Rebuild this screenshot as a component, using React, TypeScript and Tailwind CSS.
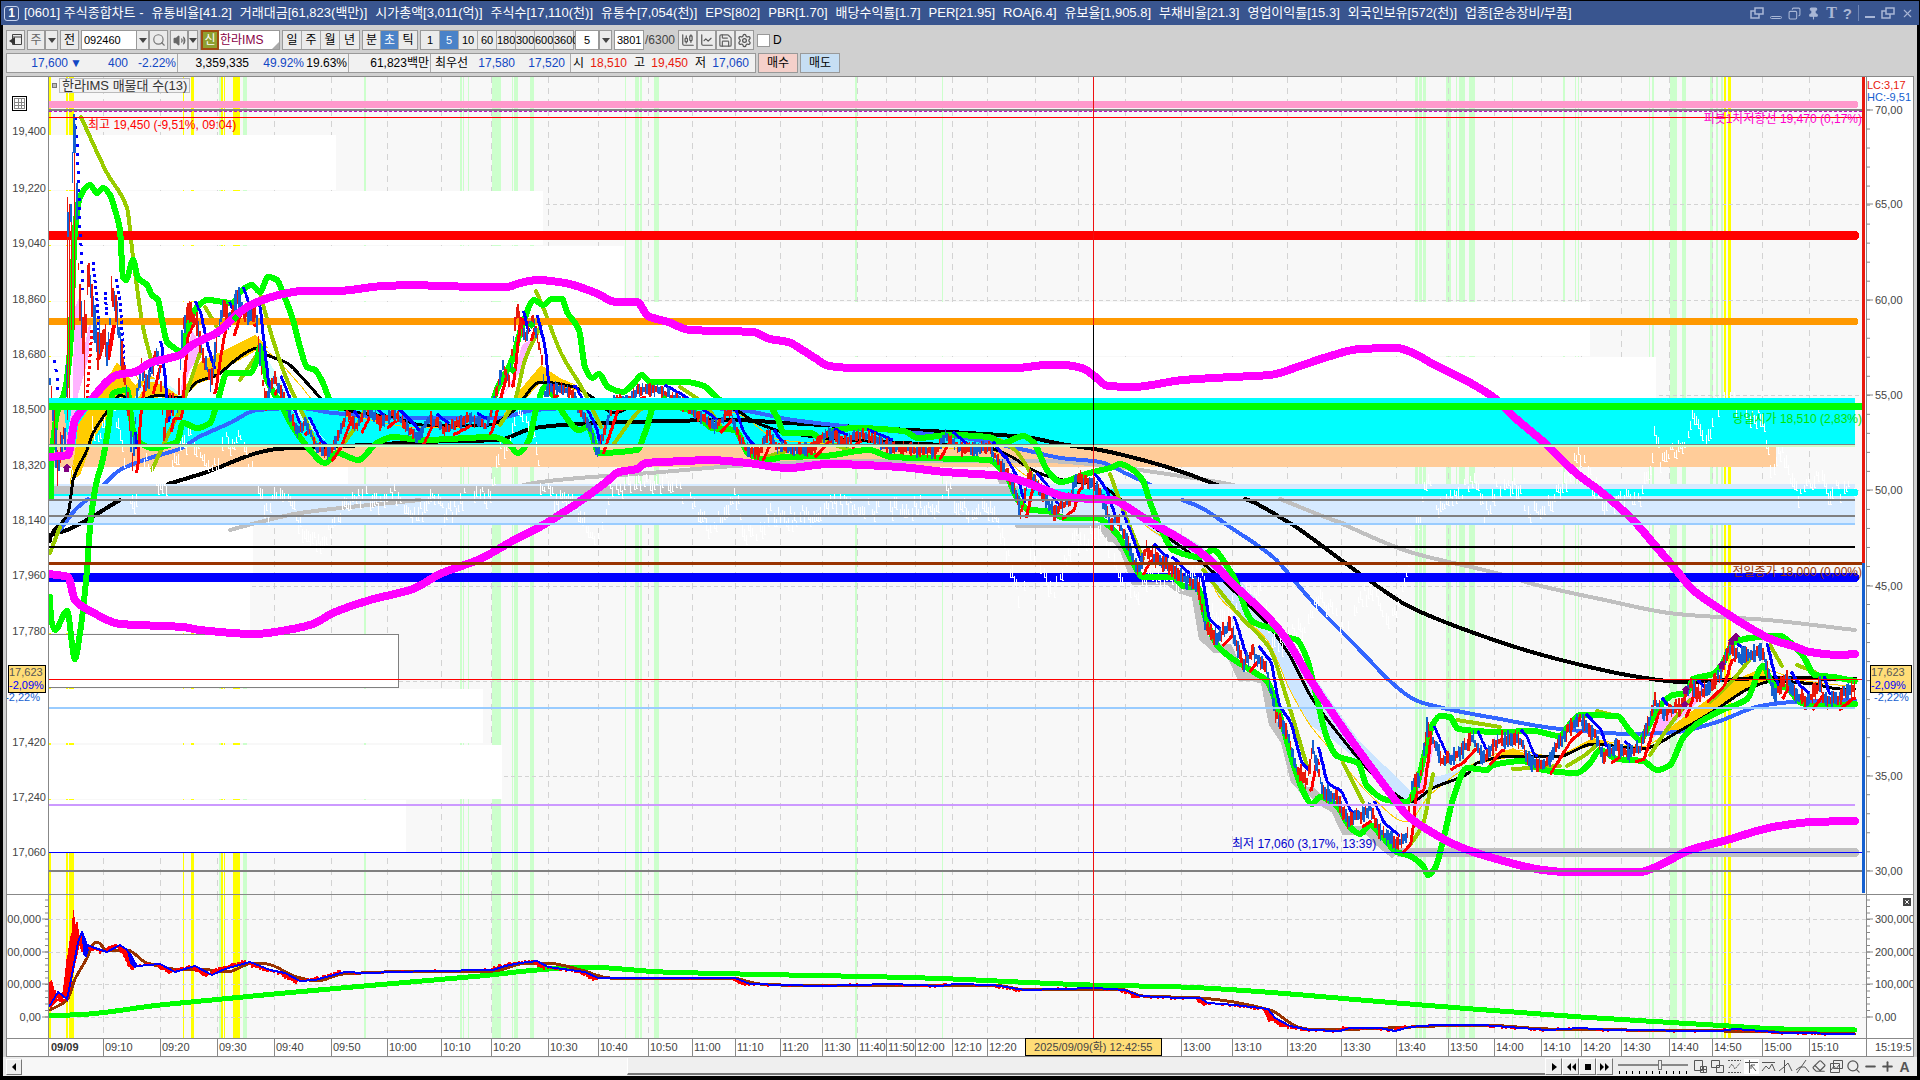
import type { ReactNode } from 'react';
import { Search, Save, Settings, Pin, X, Copy, Minus, Plus, ChartLine, Eraser, ChartCandlestick, Volume2 } from 'lucide-react';

const FONT = "font-['Liberation_Sans','Noto_Sans_CJK_KR',sans-serif]";

type Pt = [number, number];

const parse = (s: string): Pt[] => s.trim().split(/\s+/).map((p) => p.split(',').map(Number) as Pt);

const random = (seed: number) => {
  let s = seed;
  return () => {
    s = (s * 16807) % 2147483647;
    return s / 2147483647;
  };
};

const sample = (pts: Pt[], x: number) => {
  for (let i = 1; i < pts.length; i++) {
    if (x <= pts[i][0]) {
      const [x0, y0] = pts[i - 1];
      const [x1, y1] = pts[i];
      return y0 + ((y1 - y0) * (x - x0)) / (x1 - x0 || 1);
    }
  }
  return pts[pts.length - 1][1];
};

// Monotone cubic path: smooth, and never overshoots the given points
const smooth = (s: string) => {
  const p = parse(s);
  const n = p.length;
  const slopes: number[] = [];
  for (let i = 0; i < n - 1; i++) {
    const dx = p[i + 1][0] - p[i][0];
    slopes.push(dx > 0 ? (p[i + 1][1] - p[i][1]) / dx : 0);
  }
  const tangent = p.map((_, i) => {
    if (i === 0) return slopes[0];
    if (i === n - 1) return slopes[n - 2];
    const a = slopes[i - 1];
    const b = slopes[i];
    return a * b <= 0 ? 0 : (2 * a * b) / (a + b);
  });
  let d = `M${p[0][0]} ${p[0][1]}`;
  for (let i = 0; i < n - 1; i++) {
    const [x0, y0] = p[i];
    const [x1, y1] = p[i + 1];
    const h = (x1 - x0) / 3;
    if (h <= 0) d += `L${x1} ${y1}`;
    else d += `C${(x0 + h).toFixed(1)} ${(y0 + tangent[i] * h).toFixed(1)} ${(x1 - h).toFixed(1)} ${(y1 - tangent[i + 1] * h).toFixed(1)} ${x1} ${y1}`;
  }
  return d;
};

const yellowBars = [[49, 2], [66, 2], [69, 5], [183, 1], [191, 3], [221, 2], [224, 1], [233, 7], [1724, 2], [1728, 3]];
const greenBars = [
  [219, 2], [243, 4], [364, 2], [460, 2], [463, 1], [468, 1], [492, 9], [512, 1], [514, 4], [530, 4], [625, 1], [635, 4],
  [640, 2], [654, 5], [855, 2], [942, 1], [1415, 3], [1419, 3], [1423, 3], [1446, 5], [1456, 1], [1459, 6], [1469, 6],
  [1512, 1], [1563, 2], [1575, 1], [1578, 1], [1649, 1], [1652, 2], [1670, 7], [1682, 4], [1710, 3], [1716, 2], [1721, 2],
];

const times: [number, string][] = [
  [103, '09:10'], [160, '09:20'], [217, '09:30'], [274, '09:40'], [331, '09:50'], [387, '10:00'], [441, '10:10'],
  [491, '10:20'], [548, '10:30'], [598, '10:40'], [648, '10:50'], [692, '11:00'], [735, '11:10'], [780, '11:20'],
  [822, '11:30'], [857, '11:40'], [886, '11:50'], [915, '12:00'], [952, '12:10'], [987, '12:20'], [1035, ''], [1078, ''],
  [1125, ''], [1181, '13:00'], [1232, '13:10'], [1287, '13:20'], [1341, '13:30'], [1396, '13:40'], [1448, '13:50'],
  [1494, '14:00'], [1541, '14:10'], [1581, '14:20'], [1621, '14:30'], [1669, '14:40'], [1712, '14:50'], [1762, '15:00'],
  [1809, '15:10'],
];

// volume by price: y, height, right edge
const profile = [
  [135, 55, 336], [191, 54, 543], [246, 55, 624], [302, 54, 1590], [357, 42, 1656], [467, 18, 348], [525, 52, 253],
  [578, 55, 250], [689, 54, 483], [745, 54, 502], [800, 52, 406],
];

const magentaTop = '49,457 68,455 75,420 87,405 117,375 135,372 150,363 180,355 192,345 218,332 240,312 255,303 283,294 303,291 337,291 383,286 420,285 435,286 507,287 520,283 538,280 565,283 596,293 616,302 637,302 648,316 668,322 690,330 753,332 770,339 788,342 804,351 815,358 829,366 855,368 1016,368 1047,365 1063,365 1082,368 1093,375 1108,386 1133,387 1183,380 1233,377 1270,375 1300,366 1327,357 1360,349 1397,348 1413,353 1433,364 1467,381 1493,397 1513,416 1547,445 1577,474 1600,491 1633,520 1653,543 1677,571 1693,590 1723,611 1750,628 1773,640 1793,646 1810,652 1840,655 1855,654';
const magentaLow = '49,574 68,577 75,600 92,612 120,624 183,627 200,630 255,634 287,630 313,624 333,613 370,600 413,589 440,574 480,559 516,539 538,528 579,502 605,483 619,472 637,469 646,463 686,461 708,460 748,463 788,468 829,464 900,467 945,472 1003,476 1025,482 1043,489 1067,497 1093,499 1113,500 1127,507 1147,520 1187,543 1210,560 1233,584 1267,616 1287,640 1310,679 1347,734 1390,793 1407,815 1423,827 1460,847 1500,860 1543,870 1567,872 1640,872 1660,865 1690,850 1727,840 1773,827 1813,822 1855,821';
const greenTop = '51,497 51,450 57,413 65,390 70,350 75,230 80,197 90,185 97,193 103,188 110,195 115,210 120,230 123,277 126,280 133,260 138,278 147,285 152,295 158,300 162,320 167,342 173,347 182,352 188,327 197,307 207,300 233,303 240,292 252,285 260,292 268,277 277,280 283,293 293,320 300,347 307,367 315,370 323,383 330,400 340,408 367,402 420,407 489,407 498,387 512,360 523,323 534,300 543,305 552,299 562,299 567,312 579,330 585,367 592,378 599,374 608,387 623,392 634,383 642,375 650,382 686,382 704,386 712,393 726,403 766,403 777,417 784,433 811,433 820,438 833,431 855,428 904,431 918,438 949,435 989,437 1003,443 1023,436 1034,443 1047,470 1061,482 1083,475 1093,472 1110,468 1120,464 1133,470 1143,481 1150,502 1160,527 1173,550 1200,557 1213,550 1227,566 1237,584 1247,613 1253,622 1273,629 1290,638 1297,640 1307,659 1317,699 1327,738 1337,756 1358,763 1367,786 1387,800 1407,802 1417,784 1425,752 1433,724 1440,716 1450,717 1458,729 1500,732 1533,731 1560,736 1570,724 1580,715 1617,716 1630,731 1640,740 1648,727 1660,706 1673,695 1687,693 1693,679 1713,674 1723,663 1733,643 1750,638 1780,636 1793,645 1803,656 1815,675 1833,677 1855,681';
const greenLow = '50,597 51,619 55,630 67,611 75,659 80,633 86,581 91,517 97,480 102,463 108,430 113,393 127,390 133,430 140,443 152,448 177,442 183,423 197,428 210,423 218,400 227,373 250,373 257,360 260,347 267,380 280,403 293,427 310,450 325,463 337,453 358,460 377,443 393,437 422,440 494,437 507,442 518,453 529,440 536,410 545,387 554,397 563,413 579,430 588,427 599,453 637,450 646,430 654,407 677,407 695,413 712,428 735,430 748,453 766,460 784,457 824,456 869,450 891,457 989,460 1007,477 1018,500 1029,510 1047,511 1065,518 1096,518 1117,534 1133,563 1143,577 1173,577 1183,586 1198,588 1205,616 1217,645 1230,657 1257,674 1267,681 1280,716 1293,763 1303,791 1312,804 1320,797 1337,806 1350,827 1360,834 1370,825 1380,834 1397,852 1410,856 1423,866 1428,875 1435,868 1443,841 1453,799 1467,768 1487,770 1493,765 1523,761 1543,770 1577,773 1590,763 1600,750 1617,759 1643,761 1657,770 1670,765 1683,738 1697,724 1720,711 1747,699 1763,666 1773,684 1787,688 1800,702 1813,706 1855,704';
const blackLong = ['50,535 67,530 120,500 125,497 142,496', '168,484 207,472 257,453 277,449 320,447 367,445 420,442 498,440 534,428 579,424 668,421 730,420 788,423 891,429 1025,437 1061,444 1100,450 1123,455 1167,467 1217,485 1253,502 1293,525 1333,554 1370,581 1410,607 1500,642 1557,659 1633,676 1683,682 1767,678 1855,679'];
const blackMid = '50,542 52,533 68,513 73,480 87,450 93,433 110,408 120,395 133,402 160,395 180,398 197,382 217,375 233,362 247,352 257,348 267,355 287,363 307,383 327,403 360,413 393,417 422,425 489,425 512,412 541,382 574,387 592,397 614,413 641,403 686,405 730,408 757,423 788,433 846,440 891,442 989,448 1012,457 1029,468 1047,476 1079,483 1103,486 1127,504 1150,524 1200,561 1233,590 1267,624 1290,656 1310,695 1333,727 1367,768 1390,790 1410,802 1433,788 1467,774 1477,763 1513,756 1557,757 1593,744 1640,749 1683,729 1717,709 1750,688 1773,681 1813,684 1840,689 1855,689';
const blueMa = '60,530 77,508 92,497 120,470 150,458 182,448 197,438 230,423 257,410 300,408 333,413 420,418 498,418 534,410 600,407 686,407 739,410 793,420 882,430 958,437 1025,450 1061,458 1100,462 1127,474 1177,497 1200,507 1233,529 1273,557 1310,599 1350,640 1410,697 1423,703 1500,719 1560,729 1633,734 1677,732 1717,722 1760,706 1793,702 1855,700';
const grayMa = '230,530 260,522 300,513 420,500 480,496 534,483 579,478 650,473 735,466 846,461 1043,461 1100,465 1167,474 1233,485 1280,499 1333,520 1410,552 1500,574 1533,584 1600,599 1677,614 1767,620 1855,630';
const olive = [
  '81,117 107,173 127,208 133,257 143,327 152,363', '50,553 60,527', '152,470 167,437 180,410 200,353', '205,307 217,327',
  '240,380 260,350', '260,293 273,340 287,380 307,423 317,447', '335,455 357,425 370,405 393,407',
  '536,291 543,307 561,353 583,390 601,427', '500,425 515,400 525,360 541,325', '613,445 640,410 655,400',
  '680,387 705,405 720,425', '766,457 790,450', '820,440 850,450', '1000,440 1015,450 1035,480', '1110,474 1123,509 1143,559',
  '1203,570 1240,616 1270,649 1287,699 1307,766', '1343,763 1363,802', '1410,845 1423,824 1433,774', '1457,720 1500,727',
  '1513,769 1530,768 1560,766', '1567,766 1585,755 1597,745', '1597,711 1617,716', '1650,755 1670,725 1690,700',
  '1710,702 1733,680 1750,659', '1770,645 1782,666', '1797,665 1815,672',
];
const yellowMa = '50,540 68,505 72,470 85,420 95,400 120,380 130,370 150,395 180,398 200,375 255,345 275,358 300,385 325,412 360,418 422,428 495,425 541,375 575,385 600,410 625,405 690,402 740,415 780,440 850,445 990,450 1025,475 1050,488 1127,500 1145,525 1200,560 1220,598 1267,640 1290,690 1310,725 1340,760 1370,795 1407,822 1430,795 1477,762 1513,750 1557,757 1593,740 1640,747 1683,720 1720,700 1763,670 1800,680 1855,687';

const price = parse('49,370 52,400 55,440 58,475 62,440 66,430 68,230 71,220 73,150 75,125 77,200 79,290 82,320 85,350 88,270 93,313 98,350 103,330 108,350 112,290 116,310 121,350 127,400 133,465 137,395 142,365 148,385 157,350 162,400 164,433 170,405 178,405 183,325 190,310 197,325 203,355 211,382 217,340 223,308 230,323 238,295 245,315 255,310 260,355 265,400 275,378 283,397 297,432 305,423 317,447 327,455 337,440 347,413 357,427 367,407 380,423 393,413 410,430 418,440 429,417 445,430 469,417 487,427 496,393 503,367 509,380 517,307 525,340 532,317 541,353 545,393 556,387 572,393 579,407 592,433 597,453 608,420 614,402 628,400 639,390 659,390 677,400 695,413 715,427 730,410 739,437 748,450 759,453 768,433 777,447 811,450 826,433 846,442 858,433 891,447 936,452 945,435 963,450 989,448 1003,467 1014,487 1021,513 1029,477 1043,493 1054,513 1070,500 1076,478 1092,483 1103,499 1112,527 1117,516 1127,541 1137,570 1147,549 1160,563 1170,566 1182,579 1198,584 1205,627 1217,638 1230,624 1243,666 1253,652 1267,670 1275,713 1287,731 1297,770 1307,781 1313,749 1323,791 1337,799 1347,820 1360,816 1370,809 1380,831 1397,845 1407,834 1412,784 1420,781 1427,727 1433,741 1443,763 1460,752 1473,738 1483,759 1497,741 1517,738 1523,745 1530,763 1547,763 1567,731 1580,720 1597,738 1603,756 1617,747 1627,754 1640,749 1655,702 1663,713 1683,706 1690,684 1700,695 1720,677 1728,649 1740,656 1763,652 1770,681 1775,695 1785,677 1797,695 1807,702 1820,684 1825,702 1837,699 1850,688 1855,688');

const lagging = parse('90,400 95,440 105,410 115,410 121,440 130,505 135,498 145,455 160,480 165,480 180,445 190,430 205,455 217,465 223,440 240,435 258,485 268,510 275,490 285,490 300,520 315,535 325,535 345,500 367,490 380,500 395,490 418,515 429,488 445,510 470,490 490,495 500,440 505,450 516,405 535,430 540,480 555,495 575,500 590,530 598,535 610,485 640,480 670,480 690,500 710,525 735,490 745,530 760,530 768,510 780,515 820,510 826,495 870,505 940,500 945,480 960,505 990,505 1003,535 1020,600 1032,545 1053,590 1075,530 1085,540 1095,520 1110,550 1135,600 1145,570 1170,575 1198,570 1215,610 1225,610 1240,590 1260,590 1275,640 1305,620 1320,590 1345,625 1365,590 1370,580 1385,610 1400,605 1412,530 1420,515 1427,470 1435,505 1460,490 1473,475 1485,510 1497,485 1515,480 1530,510 1545,505 1567,470 1577,445 1590,475 1605,500 1640,490 1650,460 1655,425 1660,455 1683,440 1692,410 1705,440 1715,405 1728,390 1745,410 1762,410 1770,460 1783,450 1797,490 1820,470 1830,490 1855,480');

const volBlue = parse('49,1007 58,992 67,999 71,980 78,942 82,932 87,945 95,948 107,952 120,945 127,950 137,966 160,964 175,972 195,966 212,975 225,969 250,962 270,970 285,973 300,981 315,980 345,972 365,973 430,971 493,970 505,966 520,963 537,961 548,967 585,972 598,978 735,978 750,984 820,986 890,984 940,986 955,984 993,985 1025,990 1095,988 1125,990 1140,996 1180,998 1200,998 1208,1003 1235,1005 1268,1009 1275,1018 1290,1026 1310,1030 1340,1031 1350,1028 1380,1028 1395,1031 1410,1027 1435,1025 1482,1025 1548,1030 1580,1028 1610,1030 1720,1031 1735,1029 1762,1031 1785,1033 1855,1034');
const volBrown = '50,1010 67,1000 75,979 87,958 92,946 97,942 107,950 127,950 147,963 183,970 200,969 227,972 253,963 267,964 297,977 317,981 343,974 433,971 493,971 527,963 547,963 581,970 610,978 731,978 760,984 820,986 993,985 1027,990 1119,989 1143,996 1200,998 1270,1010 1298,1027 1317,1030 1388,1028 1435,1026 1482,1025 1548,1029 1723,1031 1775,1032 1855,1034';
const volGreen = '49,1015 70,1015 160,1005 274,994 387,984 480,976 537,970 585,967 663,972 925,978 1090,985 1181,987 1251,991 1397,1003 1581,1017 1713,1025 1784,1029 1855,1030';

const buildCandles = () => {
  const rnd = random(77);
  let red = '';
  let blue = '';
  let upper = '';
  let lower = '';
  for (let x = 50; x < 1855; x += 1.5) {
    const y = sample(price, x);
    const next = sample(price, x + 1.5);
    const slope = sample(price, x + 4) - sample(price, x - 4);
    const amp = x < 130 ? 22 : x < 270 ? 11 : x < 1000 ? 6 : 8;
    const a = y - 2 - rnd() * amp;
    const b = y + 2 + rnd() * amp;
    const seg = `M${x.toFixed(1)} ${a.toFixed(0)}V${b.toFixed(0)}`;
    if (rnd() > 0.5) red += seg;
    else blue += seg;
    if (x < 130) continue;
    if (slope > 3) upper += `M${x + 4} ${(y - amp).toFixed(0)}L${x + 6} ${(next - amp).toFixed(0)}`;
    if (slope < -3) lower += `M${x + 4} ${(y + amp * 1.2).toFixed(0)}L${x + 6} ${(next + amp * 1.2).toFixed(0)}`;
  }
  return { red, blue, upper, lower };
};

const buildLagging = () => {
  const rnd = random(991);
  let d = '';
  for (let x = 90; x < 1855; x += 2) {
    const y = sample(lagging, x) + (rnd() - 0.5) * 16;
    if (rnd() > 0.15) d += `M${x} ${y.toFixed(0)}v${(4 + rnd() * 9).toFixed(0)}h2`;
  }
  return d;
};

const buildVolume = () => {
  const rnd = random(5);
  let d = '';
  for (let x = 50; x < 1855; x += 1) {
    const y = sample(volBlue, x);
    const lead = sample(volBlue, x + 5) - y;
    const amp = lead * 1.6 + (rnd() - 0.5) * 3;
    d += `M${x} ${y.toFixed(0)}v${amp.toFixed(1)}`;
  }
  return d;
};

// lowest price so far, used for the stop line behind the candles
const stopLine = (() => {
  let low = 0;
  return price
    .filter(([x]) => x >= 1003 && x <= 1397)
    .map(([x, y]) => {
      low = Math.max(low, y);
      return `${x - 2},${low + 10}`;
    })
    .join(' ');
})();

const candles = buildCandles();
const laggingPath = buildLagging();
const volumePath = buildVolume();

const Bars = ({ top, height }: { top: number; height: number }) => (
  <>
    {greenBars.map(([x, w]) => (
      <rect key={`g${x}`} x={x} y={top} width={w} height={height} fill="#ccffcc" />
    ))}
    {yellowBars.map(([x, w]) => (
      <rect key={`y${x}`} x={x} y={top} width={w} height={height} fill="#ffff00" />
    ))}
    {times.map(([x]) => (
      <line key={x} x1={x + 0.5} x2={x + 0.5} y1={top} y2={top + height} stroke="#d3d3d3" strokeDasharray="6 5" />
    ))}
  </>
);

const Line = ({ pts, color, w }: { pts: string; color: string; w: number }) => (
  <path d={smooth(pts)} fill="none" stroke={color} strokeWidth={w} strokeLinejoin="round" strokeLinecap="round" />
);

const Level = ({ y, h, color, to = 1855 }: { y: number; h: number; color: string; to?: number }) => (
  <rect x={49} y={y} width={to - 49} height={h} fill={color} />
);

const MainPlot = () => (
  <svg className="absolute inset-0 h-full w-full" viewBox="49 77 1817 817" preserveAspectRatio="none" shapeRendering="crispEdges">
    <rect x={49} y={77} width={1817} height={817} fill="#f8f8f8" />
    <Bars top={77} height={817} />
    {[204, 300, 395, 490, 586, 681, 776].map((y) => (
      <line key={y} x1={49} x2={1862} y1={y + 0.5} y2={y + 0.5} stroke="#d3d3d3" strokeDasharray="4 3" />
    ))}
    {profile.map(([y, h, x]) => (
      <rect key={y} x={49} y={y} width={x - 49} height={h} fill="#ffffff" />
    ))}
    <rect x={48.5} y={634.5} width={350} height={53} fill="#ffffff" stroke="#808080" />
    <Level y={398} h={47} color="#00ffff" />
    <Level y={447} h={20} color="#ffcc99" to={1776} />
    <polygon points="49,410 64,410 68,445 68,465 49,465" fill="#ffcc99" />

    <rect x={1397} y={848} width={459} height={9} fill="#c0c0c0" />
    <polyline points={stopLine} fill="none" stroke="#c0c0c0" strokeWidth={9} />

    <polygon points="1100,485 1127,500 1160,522 1200,545 1240,580 1267,612 1300,655 1330,700 1360,742 1410,790 1410,802 1390,790 1367,768 1333,740 1310,725 1290,690 1267,640 1220,598 1200,565 1150,530" fill="#cce5ff" />
    <polygon points="1410,800 1425,780 1450,773 1475,765 1433,790 1412,806" fill="#cce5ff" />
    <polygon points="72,480 78,425 100,392 117,362 135,385 150,375 180,395 200,362 235,345 255,335 268,348 257,350 233,364 217,377 197,384 180,402 160,397 133,403 120,397 93,440 80,475" fill="#ffcc00" />
    <polygon points="500,420 520,390 541,365 560,378 590,394 541,382 512,414" fill="#ffcc00" />
    <polygon points="1660,735 1700,705 1730,683 1767,665 1773,681 1750,688 1717,709 1683,729" fill="#ffcc00" />
    <polygon points="1475,764 1513,748 1530,756 1513,757" fill="#ffcc00" />
    <polygon points="1557,757 1593,738 1620,746 1593,745" fill="#ffcc00" />
    <polygon points="73,400 74,310 80,295 84,350 92,310 88,360 78,395 70,445 66,445" fill="#ffb3ff" />
    <polygon points="183,370 192,330 203,350 190,370 180,400" fill="#ffb3ff" />
    <polygon points="512,380 522,345 538,335 520,372 500,400" fill="#ffb3ff" />
    <polygon points="1411,825 1416,790 1428,738 1434,745 1425,790" fill="#ffb3ff" />
    <polygon points="1445,758 1473,741 1455,760" fill="#ffb3ff" />
    <polygon points="1657,715 1680,712 1692,690 1720,682 1680,718 1650,740" fill="#ffb3ff" />
    <polygon points="262,350 275,372 300,410 325,440 300,420 270,385" fill="#ccffff" />
    <Line pts="135,400 150,380 165,385 180,395" color="#ccffff" w={3} />

    <Line pts={grayMa} color="#c0c0c0" w={4} />
    <Line pts={yellowMa} color="#ffcc00" w={1} />
    {blackLong.map((pts) => (
      <Line key={pts} pts={pts} color="#000000" w={4} />
    ))}
    <Line pts={blueMa} color="#3366ff" w={4} />
    <Line pts={blackMid} color="#000000" w={3} />

    <Level y={484} h={40} color="#d6eaff" />
    <Level y={489} h={7} color="#00ffff" />
    <Level y={486} h={8} color="#c0c0c0" to={1018} />
    <Line pts="230,530 260,522 300,513 420,500" color="#c0c0c0" w={4} />
    <Line pts="1280,499 1333,520 1345,524" color="#c0c0c0" w={4} />
    <Line pts="50,535 67,530 120,500" color="#000000" w={4} />
    <Line pts="1245,499 1253,502 1293,525" color="#000000" w={4} />
    <Line pts="60,530 77,508 88,499" color="#3366ff" w={4} />
    <Line pts="1182,500 1200,507 1233,529" color="#3366ff" w={4} />
    <Line pts="52,533 68,513 73,480" color="#000000" w={3} />
    <Line pts="1103,486 1127,504 1150,524" color="#000000" w={3} />

    {olive.map((pts) => (
      <Line key={pts} pts={pts} color="#99cc00" w={4} />
    ))}

    <Level y={231} h={9} color="#ff0000" />
    <Level y={318} h={7} color="#ff9900" />
    <Level y={573} h={9} color="#0000ff" />
    <path d={laggingPath} stroke="#ffffff" fill="none" />
    <Line pts={greenTop} color="#00ff00" w={6} />
    <Line pts={greenLow} color="#00ff00" w={6} />
    <path d={candles.upper} stroke="#0000ff" strokeWidth={3} fill="none" />
    <path d={candles.lower} stroke="#ff0000" strokeWidth={3} fill="none" />
    <polyline points="75,117 77,142 78,170 79,195 80,230 81,245 82,265 83,290" fill="none" stroke="#0000ff" strokeWidth={3} strokeDasharray="3 6" />
    <polyline points="93,262 97,300 99,330" fill="none" stroke="#0000ff" strokeWidth={3} strokeDasharray="3 3" />
    <polyline points="105,292 107,315" fill="none" stroke="#0000ff" strokeWidth={3} strokeDasharray="3 2" />
    <polyline points="116,279 120,300 123,345 124,380" fill="none" stroke="#0000ff" strokeWidth={3} strokeDasharray="3 3" />
    <polyline points="54,360 57,375 57,395" fill="none" stroke="#0000ff" strokeWidth={3} strokeDasharray="3 6" />
    <polyline points="92,330 89,370 87,400" fill="none" stroke="#ff0000" strokeWidth={3} strokeDasharray="3 3" />
    <polyline points="98,360 104,340" fill="none" stroke="#ff0000" strokeWidth={4} />
    <polyline points="108,360 114,325" fill="none" stroke="#ff0000" strokeWidth={4} />
    <path d="M74 116V330M71 216V330M67 197V420M69 204V400M84 300V400" stroke="#e8190c" fill="none" />
    <path d={candles.red} stroke="#e8190c" strokeWidth={1.4} fill="none" />
    <path d={candles.blue} stroke="#1560d0" strokeWidth={1.2} fill="none" />
    <Line pts={magentaTop} color="#ff00ff" w={8} />
    <Line pts={magentaLow} color="#ff00ff" w={8} />
    {[[67, 468], [1685, 705], [1686, 690], [1722, 665], [1732, 641], [1736, 637]].map(([x, y]) => (
      <path key={`${x}${y}`} d={`M${x} ${y - 4}l4 4h-2v4h-5v-4h-2z`} fill="#800080" />
    ))}
    {[[235, 318], [512, 370], [531, 325], [664, 399]].map(([x, y]) => (
      <path key={x} d={`M${x} ${y - 4}l4 4l-4 4l-4-4z`} fill="#00e600" />
    ))}

    <Level y={101} h={7} color="#ff99cc" />
    <circle cx={1855} cy={104.5} r={3.5} fill="#ff99cc" />
    <circle cx={1855} cy={235.5} r={4.5} fill="#ff0000" />
    <circle cx={1855} cy={321.5} r={3.5} fill="#ff9900" />
    <circle cx={1855} cy={492.5} r={3.5} fill="#00ffff" />
    <circle cx={1855} cy={577.5} r={4.5} fill="#0000ff" />
    <circle cx={1855} cy={852.5} r={4.5} fill="#c0c0c0" />
    <Level y={109} h={2} color="#808080" to={1862} />
    <line x1={49} x2={1862} y1={111.5} y2={111.5} stroke="#cc00cc" strokeDasharray="3 2" />
    <Level y={117} h={1} color="#ff0000" to={1862} />
    <Level y={398} h={5} color="#00ffff" />
    <Level y={403} h={7} color="#00ff00" to={1862} />
    <Level y={444} h={1} color="#808080" />
    <Level y={445} h={2} color="#ccffcc" />
    <Level y={499} h={2} color="#808080" />
    <Level y={515} h={2} color="#808080" />
    <Level y={523} h={2} color="#99ccff" />
    <Level y={546} h={2} color="#000000" />
    <Level y={562} h={3} color="#993300" to={1862} />
    <Level y={707} h={2} color="#99ccff" />
    <Level y={804} h={2} color="#cc99ff" />
    <Level y={852} h={1} color="#0000ff" to={1862} />
    <Level y={870} h={2} color="#808080" to={1862} />
    <Level y={679} h={1} color="#ff0000" to={1862} />
    <rect x={1093} y={77} width={1} height={817} fill="#ee1111" />
    <rect x={1093} y={325} width={1} height={120} fill="#000000" />
    <rect x={1862} y={77} width={3} height={486} fill="#e8190c" />
    <rect x={1862} y={563} width={3} height={330} fill="#1560d0" />
    <rect x={1865} y={77} width={1} height={817} fill="#ffffff" />
  </svg>
);

const SubPlot = () => (
  <svg className="block h-full w-full" viewBox="49 895 1817 143" preserveAspectRatio="none" shapeRendering="crispEdges">
    <rect x={49} y={895} width={1817} height={143} fill="#f8f8f8" />
    <Bars top={895} height={143} />
    {[919, 952, 984, 1017].map((y) => (
      <line key={y} x1={49} x2={1866} y1={y + 0.5} y2={y + 0.5} stroke="#d3d3d3" strokeDasharray="4 3" />
    ))}
    <Line pts={volGreen} color="#00ff00" w={5} />
    <Line pts={volBrown} color="#993300" w={3} />
    <path d={volumePath} stroke="#ff0000" strokeWidth={1.5} fill="none" />
    <polygon points="49,982 52,980 54,988 57,998 61,1003 66,1000 68,975 70,960 72,930 73,907 75,920 77,935 82,935 74,970 69,998 58,1001 50,1008" fill="#ff0000" />
    <polygon points="82,932 87,945 89,950 86,958 83,955" fill="#0000ff" />
    <polygon points="127,950 131,953 137,966 135,969 130,963" fill="#0000ff" />
    <polyline points={volBlue.map((p) => p.join(',')).join(' ')} fill="none" stroke="#0000ff" strokeWidth={2} />
    <rect x={1093} y={895} width={1} height={143} fill="#ee1111" />
  </svg>
);

// Text and ticks are placed in percent so that they keep their shape when the pane is resized
const py = (y: number, top: number, h: number) => `${((y - top) / h) * 100}%`;
const px = (x: number) => `${((x - 49) / 1817) * 100}%`;

const notes = [
  { x: 88, y: 125, anchor: 'start', color: '#ff0000', text: '최고 19,450 (-9,51%, 09:04)' },
  { x: 1862, y: 119, anchor: 'end', color: '#ff00cc', text: '피봇1차저항선 19,470 (0,17%)' },
  { x: 1862, y: 419, anchor: 'end', color: '#00e600', text: '당일시가 18,510 (2,83%)' },
  { x: 1862, y: 572, anchor: 'end', color: '#993300', text: '전일종가 18,000 (0,00%)' },
  { x: 1232, y: 844, anchor: 'start', color: '#0000cc', text: '최저 17,060 (3,17%, 13:39)' },
];

const leftLabels: [number, string][] = [
  [131, '19,400'], [188, '19,220'], [243, '19,040'], [299, '18,860'], [354, '18,680'], [409, '18,500'], [465, '18,320'],
  [520, '18,140'], [575, '17,960'], [631, '17,780'], [742, '17,420'], [797, '17,240'], [852, '17,060'],
];
const rightLabels: [number, string][] = [
  [110, '70,00'], [204, '65,00'], [300, '60,00'], [395, '55,00'], [490, '50,00'], [586, '45,00'], [776, '35,00'], [871, '30,00'],
];
const volumeLabels: [number, string][] = [[919, '300,000'], [952, '200,000'], [984, '100,000'], [1017, '0,00']];

const PriceTag = () => (
  <div className="border border-black bg-[#ffdd77] text-[11px] leading-[13px]">
    <div className="overflow-hidden text-[#555555]">17,623</div>
    <div className="overflow-hidden text-[#0000ff]">-2,09%</div>
  </div>
);

const LeftAxis = () => (
  <div className="relative w-[42px] shrink-0 overflow-hidden border-r border-[#888888] bg-white">
    <div className="absolute left-[5px] top-[19px] grid size-[15px] place-items-center border border-black bg-white">
      <svg viewBox="0 0 11 11" className="size-[11px]" shapeRendering="crispEdges">
        <path d="M0.5 0.5h10v10h-10zM4 0v11M7 0v11M0 4h11M0 7h11" fill="none" stroke="#888" />
      </svg>
    </div>
    <svg className="h-full w-full text-[11px]">
      {leftLabels.map(([y, t]) => (
        <text key={t} x="39" y={py(y, 77, 817)} dy="4" textAnchor="end" fill="#444444">{t}</text>
      ))}
      <text x="33" y={py(697, 77, 817)} dy="4" textAnchor="end" fill="#1560d0">-2,22%</text>
    </svg>
    <div className="absolute left-px top-[72%] w-[38px]">
      <PriceTag />
    </div>
  </div>
);

const RightAxis = () => (
  <div className="relative w-[47px] shrink-0 overflow-hidden border-l border-[#888888] bg-white">
    <svg className="h-full w-full text-[11px]">
      {Array.from({ length: 41 }, (_, i) => 110 + i * 19.02).map((y) => (
        <line key={y} x1="0" x2="3" y1={py(y, 77, 817)} y2={py(y, 77, 817)} stroke="#888888" />
      ))}
      <text x="0" y="12" fill="#e8190c">LC:3,17</text>
      <text x="0" y="24" fill="#1560d0">HC:-9,51</text>
      {rightLabels.map(([y, t]) => (
        <g key={t}>
          <line x1="0" x2="6" y1={py(y, 77, 817)} y2={py(y, 77, 817)} stroke="#888888" />
          <text x="8" y={py(y, 77, 817)} dy="4" fill="#444444">{t}</text>
        </g>
      ))}
      <text x="7" y={py(697, 77, 817)} dy="4" fill="#1560d0">-2,22%</text>
    </svg>
    <div className="absolute left-[3px] top-[72%] w-[42px]">
      <PriceTag />
    </div>
  </div>
);

const VolumeAxis = ({ side }: { side: 'left' | 'right' }) => (
  <div className={side === 'left' ? 'w-[42px] shrink-0 overflow-hidden border-r border-[#888888] bg-white' : 'relative w-[47px] shrink-0 overflow-hidden border-l border-[#888888] bg-white'}>
    <svg className="h-full w-full text-[11px]">
      {Array.from({ length: 19 }, (_, i) => 900 + i * 6.5).map((y) => (
        <line key={y} x1={side === 'left' ? 38 : 0} x2={side === 'left' ? 41 : 3} y1={py(y, 895, 143)} y2={py(y, 895, 143)} stroke="#888888" />
      ))}
      {volumeLabels.map(([y, t]) => (
        <g key={t}>
          <line x1={side === 'left' ? 35 : 0} x2={side === 'left' ? 41 : 6} y1={py(y, 895, 143)} y2={py(y, 895, 143)} stroke="#888888" />
          <text x={side === 'left' ? 34 : 8} y={py(y, 895, 143)} dy="4" textAnchor={side === 'left' ? 'end' : 'start'} fill="#444444">{t}</text>
        </g>
      ))}
    </svg>
    {side === 'right' && (
      <button aria-label="닫기" className="absolute right-[2px] top-[3px] grid size-2 place-items-center bg-[#444444] text-white">
        <X className="size-[6px]" strokeWidth={4} />
      </button>
    )}
  </div>
);

const titleParts = [
  '[0601] 주식종합차트 -', '유통비율[41.2]', '거래대금[61,823(백만)]', '시가총액[3,011(억)]', '주식수[17,110(천)]', '유통수[7,054(천)]',
  'EPS[802]', 'PBR[1.70]', '배당수익률[1.7]', 'PER[21.95]', 'ROA[6.4]', '유보율[1,905.8]', '부채비율[21.3]', '영업이익률[15.3]',
  '외국인보유[572(천)]', '업종[운송장비/부품]',
];

const Overlap = () => (
  <svg viewBox="0 0 14 12" className="h-3 w-3.5" fill="none" stroke="currentColor" strokeWidth={1.5}>
    <path d="M5 1h8v6H5zM9 7v4H1V4h4" />
  </svg>
);

const TitleBar = () => (
  <header className="flex h-6 shrink-0 items-center bg-[#39558f] pl-[3px] pr-[5px] text-[13px] text-white">
    <span className="mr-[5px] grid size-[15px] shrink-0 place-items-center rounded-[3px] border border-[#c8d4ee] text-[12px] font-bold leading-none">1</span>
    <h1 className="flex min-w-0 flex-1 gap-x-2 overflow-hidden whitespace-nowrap">
      {titleParts.map((part) => (
        <span key={part}>{part}</span>
      ))}
    </h1>
    <div className="flex shrink-0 items-center gap-[6px] text-[#a9b7d6]">
      <button aria-label="창 분리"><Overlap /></button>
      <button aria-label="내리기" className="mt-2 h-[3px] w-3 rounded-full border border-current" />
      <button aria-label="복사"><Copy className="size-[13px] -scale-x-100" /></button>
      <button aria-label="고정"><Pin className="size-[13px] fill-current" /></button>
      <button aria-label="글꼴" className="font-['Liberation_Serif',serif] text-[16px] font-bold leading-none">T</button>
      <button aria-label="도움말" className="text-[15px] font-bold leading-none">?</button>
      <span className="h-4 w-px bg-[#6f86b5]" />
      <button aria-label="최소화" className="mt-2 h-[2px] w-[10px] bg-current" />
      <button aria-label="복원"><Overlap /></button>
      <button aria-label="창 닫기"><X className="size-[13px]" /></button>
    </div>
  </header>
);

const Box = ({ children, label, className = '' }: { children: ReactNode; label?: string; className?: string }) => (
  <button aria-label={label} className={`grid h-5 shrink-0 place-items-center border border-[#999999] bg-[#ebebeb] leading-none ${className}`}>{children}</button>
);

const Arrow = () => <span className="h-0 w-0 border-x-4 border-t-[5px] border-x-transparent border-t-[#444444]" />;

const Segments = ({ items, active, cell }: { items: string[]; active?: string; cell: string }) => (
  <div className="flex h-5 shrink-0 border border-[#999999] bg-[#ebebeb]">
    {items.map((item) => (
      <button
        key={item}
        className={`${cell} whitespace-nowrap border-r border-[#aaaaaa] text-center leading-none last:border-r-0 ${item === active ? 'bg-[#4a82c8] text-white' : ''}`}
      >
        {item}
      </button>
    ))}
  </div>
);

const Toolbar = () => (
  <div className="mt-[5px] flex h-5 shrink-0 items-center px-[3px] text-[12px]">
    <Box label="화면 배치" className="w-[19px]">
      <svg viewBox="0 0 14 14" className="size-[14px]" fill="none" stroke="#444">
        <path d="M3.5 1.5h9v10h-9zM3 4h10" />
        <path d="M0 8l6-4v8z" fill="#333" stroke="none" />
      </svg>
    </Box>
    <Box className="ml-[2px] w-[18px] text-[#666666]">주</Box>
    <Box label="주기 선택" className="w-[13px]"><Arrow /></Box>
    <Box className="ml-[2px] w-[19px]">전</Box>
    <input aria-label="종목코드" defaultValue="092460" className="ml-[2px] h-5 w-[55px] border border-r-0 border-[#999999] bg-white pl-[2px] text-[11px]" />
    <Box label="종목 목록" className="w-[13px]"><Arrow /></Box>
    <Box label="종목 검색" className="w-[19px]"><Search className="size-[14px] text-[#777777]" /></Box>
    <Box label="음성" className="ml-[2px] w-[18px]"><Volume2 className="size-[13px] fill-current text-[#666666]" /></Box>
    <Box label="음성 설정" className="w-[10px]"><Arrow /></Box>
    <div className="ml-[2px] flex h-5 w-[80px] shrink-0 items-center border border-[#999999] bg-white text-[#880044]">
      <span className="grid h-5 w-[18px] place-items-center border-2 border-[#a04a10] bg-[#8fa030] leading-none text-white">신</span>
      <span className="flex-1 whitespace-nowrap pl-px">한라IMS</span>
      <span className="self-end border-b-[7px] border-l-[7px] border-b-[#aaaaaa] border-l-transparent" />
    </div>
    <div className="w-[2px]" />
    <Segments items={['일', '주', '월', '년']} cell="w-[19px]" />
    <div className="w-[2px]" />
    <Segments items={['분', '초', '틱']} active="초" cell="w-[18px]" />
    <div className="w-[2px]" />
    <div className="text-[11px]">
      <Segments items={['1', '5', '10', '60', '180', '300', '600', '3600']} active="5" cell="w-[19px]" />
    </div>
    <select aria-label="간격" className="ml-px h-5 w-[24px] appearance-none border border-[#999999] bg-white pl-2 text-[11px]">
      <option>5</option>
    </select>
    <Box label="간격 목록" className="w-[13px]"><Arrow /></Box>
    <input aria-label="조회 개수" defaultValue="3801" className="ml-[2px] h-5 w-[30px] shrink-0 border border-[#999999] bg-white pl-[2px] text-[11px]" />
    <span className="ml-px w-[33px] shrink-0 text-[#444444]">/6300</span>
    <Box label="차트 추가" className="w-[19px]"><ChartCandlestick className="size-[14px] text-[#555555]" /></Box>
    <Box label="지표 추가" className="w-[19px]"><ChartLine className="size-[14px] text-[#555555]" /></Box>
    <Box label="저장" className="w-[19px]"><Save className="size-[15px] text-[#666666]" /></Box>
    <Box label="설정" className="w-[19px]"><Settings className="size-[15px] text-[#555555]" /></Box>
    <label className="ml-[3px] flex items-center gap-[3px]">
      <input type="checkbox" className="size-[13px] appearance-none border border-[#999999] bg-white" />D
    </label>
  </div>
);

const quote: [string, string][] = [
  ['17,600', 'w-[61px] text-[#1147c4]'], ['▼', 'w-[14px] text-[#1147c4]'], ['400', 'w-[46px] text-[#1147c4]'],
  ['-2.22%', 'w-[50px] border-r border-[#aaaaaa] pr-px text-[#1147c4]'], ['3,359,335', 'w-[71px]'], ['49.92%', 'w-[55px] text-[#1147c4]'],
  ['19.63%', 'w-[45px] border-r border-[#aaaaaa] pr-px'], ['61,823백만', 'w-[82px] border-r border-[#aaaaaa] pr-px'], ['최우선', 'w-[37px]'],
  ['17,580', 'w-[47px] text-[#1147c4]'], ['17,520', 'w-[56px] border-r border-[#aaaaaa] pr-[5px] text-[#1147c4]'], ['시', 'w-[13px]'],
  ['18,510', 'w-[43px] text-[#e8190c]'], ['고', 'w-[18px]'], ['19,450', 'w-[43px] text-[#e8190c]'], ['저', 'w-[18px]'],
  ['17,060', 'w-[43px] text-[#1147c4]'],
];

const QuoteBar = () => (
  <div className="mb-[3px] mt-[3px] flex h-5 shrink-0 px-[3px] text-[12px]">
    <div className="flex w-[750px] items-center border border-[#999999] bg-[#f1f1f1] leading-[18px]">
      {quote.map(([text, cls], i) => (
        <span key={i} className={`shrink-0 whitespace-nowrap text-right ${cls}`}>{text}</span>
      ))}
    </div>
    <button className="ml-[2px] w-10 border border-[#999999] bg-[#f5d0ca] leading-none">매수</button>
    <button className="ml-[2px] w-10 border border-[#999999] bg-[#c6def3] leading-none">매도</button>
  </div>
);

const TimeAxis = () => (
  <div className="flex h-[17px] shrink-0 bg-white">
    <div className="w-[42px] shrink-0 border-r border-[#888888]" />
    <div className="relative flex-1">
      <svg className="block h-full w-full text-[11px]">
        <text x="2" y="12" fontWeight="bold" fill="#333333">09/09</text>
        {times.filter(([, t]) => t).map(([x, t]) => (
          <svg key={x} x={px(x)} overflow="visible">
            <line x1="0.5" x2="0.5" y1="0" y2="17" stroke="#888888" />
            <text x="2" y="12" fill="#444444">{t}</text>
          </svg>
        ))}
      </svg>
      <div className="absolute left-[53.7%] -top-px w-[137px] whitespace-nowrap border border-black bg-[#ffdd77] text-center text-[11px] leading-4 text-[#444444]">
        2025/09/09(화) 12:42:55
      </div>
    </div>
    <div className="w-[47px] shrink-0 overflow-hidden whitespace-nowrap border-l border-[#888888] pl-2 text-[11px] leading-4 text-[#444444]">15:19:5</div>
  </div>
);

const drawTools: [string, ReactNode][] = [
  ['복제', <path key="a" d="M1.5 1.5h8v10h-8zM7.5 7.5h6v6h-6zM10.5 7v7M7 10.5h7" />],
  ['겹치기', <path key="b" d="M1.5 1.5h8v7h-8zM6.5 6.5h7v7h-7z" />],
  ['범위', <path key="c" d="M1 1.5h13M1 13.5h13M2 9l3-4 3 5 5-6" strokeDasharray="2 1" />],
  ['십자선', <path key="d" d="M1 3.5h13M5.5 1v13M7 6l5 6M7 6v4M7 6h4" />],
  ['추세', <path key="e" d="M1 3.5h13M1 12l4-5 3 3 3-5 3 7" />],
  ['수직선', <path key="f" d="M6.5 1v13M1 12l5-4 4-4 4 8" />],
  ['사선', <path key="g" d="M2 14L11 1M1 11l4-3 5 0 4 5" />],
  ['지우개', <Eraser key="h" size={14} />],
  ['그림', <path key="i" d="M4.5 1.5h9v8h-9zM1.5 4.5h9v9h-9zM2 11l3-4 2 3 3-4" />],
];

const playback: [string, string][] = [
  ['재생', 'M3 1l5 4-5 4z'], ['뒤로', 'M5 1L1 5l4 4zM10 1L6 5l4 4z'], ['정지', 'M2 2h6v6H2z'], ['앞으로', 'M0 1l4 4-4 4zM5 1l4 4-4 4z'],
];

const BottomBar = () => (
  <div className="flex h-[19px] shrink-0 items-center bg-[#ececec] pl-[3px] pr-[5px]">
    <button aria-label="왼쪽으로" className="grid h-4 w-4 place-items-center border border-b-[#777777] border-l-white border-r-[#777777] border-t-white bg-[#efefef]">
      <span className="border-y-4 border-r-4 border-y-transparent border-r-black" />
    </button>
    <div className="flex h-[17px] flex-1 bg-[#f7f7f7]">
      <div className="ml-auto w-[60.3%] border-b-2 border-l border-b-[#777777] border-l-white bg-[#efefef]" />
    </div>
    {playback.map(([name, d]) => (
      <button key={name} aria-label={name} className="grid h-[17px] w-[17px] place-items-center border border-b-[#777777] border-l-white border-r-[#777777] border-t-white bg-[#efefef]">
        <svg viewBox="0 0 10 10" className="size-[10px]">
          <path d={d} />
        </svg>
      </button>
    ))}
    <div className="ml-[5px] flex w-[70px] flex-col">
      <input
        type="range"
        aria-label="확대 배율"
        defaultValue={61}
        className="h-[12px] w-full appearance-none bg-transparent [&::-webkit-slider-runnable-track]:h-[2px] [&::-webkit-slider-runnable-track]:bg-[#888888] [&::-webkit-slider-thumb]:-mt-1 [&::-webkit-slider-thumb]:h-[10px] [&::-webkit-slider-thumb]:w-1 [&::-webkit-slider-thumb]:appearance-none [&::-webkit-slider-thumb]:border [&::-webkit-slider-thumb]:border-[#777777] [&::-webkit-slider-thumb]:bg-[#efefef]"
      />
      <div className="flex h-[3px] justify-between px-px">
        {Array.from({ length: 11 }, (_, i) => (
          <span key={i} className="w-px bg-black" />
        ))}
      </div>
    </div>
    <div className="ml-[5px] flex gap-[2px] text-[#555555]">
      {drawTools.map(([name, icon]) => (
        <button key={name} aria-label={name} className={name === '십자선' ? 'bg-white' : ''}>
          <svg viewBox="0 0 15 15" className="size-[15px]" fill="none" stroke="currentColor">{icon}</svg>
        </button>
      ))}
      <button aria-label="돋보기"><Search className="size-[15px]" /></button>
      <button aria-label="축소"><Minus className="size-[15px]" strokeWidth={3} /></button>
      <button aria-label="확대"><Plus className="size-[15px]" strokeWidth={3} /></button>
      <button aria-label="글자" className="w-[15px] text-[14px] font-bold leading-none">A</button>
    </div>
  </div>
);

export default function App() {
  return (
    <div className={`flex h-screen flex-col overflow-hidden bg-black px-px pb-1 pt-px ${FONT}`}>
      <TitleBar />
      <main className="ml-[2px] mr-[2px] flex min-h-0 flex-1 flex-col bg-[#d0d0d0]">
        <Toolbar />
        <QuoteBar />
        <section className="mx-[3px] flex min-h-0 flex-1 flex-col border border-[#888888]">
          <div className="flex min-h-0 flex-1">
            <LeftAxis />
            <div className="relative flex-1 overflow-hidden">
              <MainPlot />
              <svg className="absolute inset-0 h-full w-full text-[12px]">
                {notes.map((n) => (
                  <text key={n.text} x={px(n.x)} y={py(n.y, 77, 817)} dy="4" textAnchor={n.anchor as 'start' | 'end'} fill={n.color}>{n.text}</text>
                ))}
              </svg>
              <div className="absolute left-[3px] top-px flex items-center gap-[2px]">
                <span className="size-[5px] border border-[#777777] bg-[#bbbbbb]" />
                <span className="border border-[#bbbbbb] bg-[#f2f2f2] px-[2px] text-[13px] leading-[13px] text-[#333333]">한라IMS 매물대 수(13)</span>
              </div>
            </div>
            <RightAxis />
          </div>
          <div className="flex h-[145px] shrink-0 border-y border-[#888888]">
            <VolumeAxis side="left" />
            <div className="min-w-0 flex-1">
              <SubPlot />
            </div>
            <VolumeAxis side="right" />
          </div>
          <TimeAxis />
        </section>
        <BottomBar />
      </main>
    </div>
  );
}
